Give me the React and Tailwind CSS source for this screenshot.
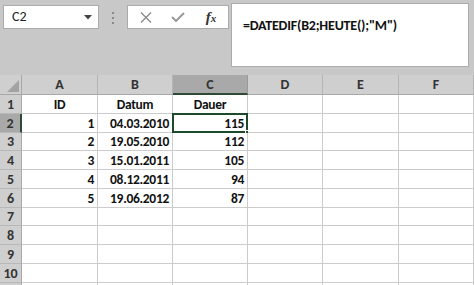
import React from "react";

const COLS = [
  { key: "A", w: "w-[76px]" },
  { key: "B", w: "w-[75px]" },
  { key: "C", w: "w-[75px]" },
  { key: "D", w: "w-[75px]" },
  { key: "E", w: "w-[76px]" },
  { key: "F", w: "w-[75px]" },
];

const ROW_H = ["h-[19px]", "h-[19px]", "h-[18px]", "h-[19px]", "h-[19px]", "h-[19px]", "h-[18px]", "h-[19px]", "h-[19px]", "h-[19px]", "h-[19px]"];

const DATA = {
  1: { A: ["ID", "c"], B: ["Datum", "c"], C: ["Dauer", "c"] },
  2: { A: ["1", "r"], B: ["04.03.2010", "r"], C: ["115", "r"] },
  3: { A: ["2", "r"], B: ["19.05.2010", "r"], C: ["112", "r"] },
  4: { A: ["3", "r"], B: ["15.01.2011", "r"], C: ["105", "r"] },
  5: { A: ["4", "r"], B: ["08.12.2011", "r"], C: ["94", "r"] },
  6: { A: ["5", "r"], B: ["19.06.2012", "r"], C: ["87", "r"] },
};

function Cell({ row, col }) {
  const d = DATA[row] && DATA[row][col.key];
  const selected = row === 2 && col.key === "C";
  return (
    <div
      className={`relative ${col.w} h-full shrink-0 bg-white border-r border-b border-[#cccccc] flex items-end ${
        d && d[1] === "c" ? "justify-center" : "justify-end pr-[3px]"
      }`}
    >
      {d && (
        <span className={`text-[13.5px] leading-[16px] text-[#111] ${row === 1 ? "font-bold" : "font-semibold"} tracking-[-0.3px]`}>
          {d[0]}
        </span>
      )}
      {selected && (
        <>
          <div className="absolute -left-[1px] -top-[1px] right-[-1px] bottom-[-1px] border-2 border-[#1e4a2c]" />
          <div className="absolute right-[-4px] bottom-[-4px] w-[6px] h-[6px] bg-[#1e4a2c] border border-white" />
        </>
      )}
    </div>
  );
}

export default function App() {
  return (
    <div className="w-[474px] h-[285px] overflow-hidden bg-[#c8c8c8] flex flex-col font-['Carlito','Lato',sans-serif] text-[#222]">
      {/* Toolbar */}
      <div className="h-[75px] shrink-0 flex items-start">
        <div className="ml-[3px] mt-[5px] w-[96px] h-[24px] bg-white border border-[#ababab] flex items-center justify-between pl-[8px] pr-[6px]">
          <span className="text-[14px] leading-none text-[#222]">C2</span>
          <svg width="8" height="5" viewBox="0 0 8 5">
            <path d="M0 0 H8 L4 4.5 Z" fill="#444" />
          </svg>
        </div>
        <div className="ml-[13px] mt-[12px] flex flex-col gap-[3px]">
          <div className="w-[2px] h-[2px] bg-[#8a8a8a]" />
          <div className="w-[2px] h-[2px] bg-[#8a8a8a]" />
          <div className="w-[2px] h-[2px] bg-[#8a8a8a]" />
        </div>
        <div className="ml-[13px] mt-[5px] w-[102px] h-[24px] bg-white border border-[#ababab] flex items-center">
          <div className="w-[34px] flex justify-center pl-[2px]">
            <svg width="12" height="11" viewBox="0 0 12 11">
              <path d="M1 0.5 L11 10.5 M11 0.5 L1 10.5" stroke="#8a8a8a" strokeWidth="1.4" />
            </svg>
          </div>
          <div className="w-[32px] flex justify-center">
            <svg width="14" height="10" viewBox="0 0 14 10">
              <path d="M1 5 L5 9 L13 1" stroke="#9a9a9a" strokeWidth="2" fill="none" />
            </svg>
          </div>
          <div className="w-[34px] flex justify-center">
            <span className="font-['Liberation_Serif',serif] italic font-bold text-[15px] leading-none text-[#333]">
              f<span className="text-[11px]">x</span>
            </span>
          </div>
        </div>
        <div className="ml-[2px] mt-[3px] w-[238px] h-[64px] bg-white border border-[#ababab] pl-[11px] pt-[9px]">
          <span className="text-[14px] leading-none font-semibold text-[#111] tracking-[-0.2px]">=DATEDIF(B2;HEUTE();"M")</span>
        </div>
      </div>

      {/* Column header row */}
      <div className="h-[20px] shrink-0 flex">
        <div className="w-[22px] h-full shrink-0 bg-[#cfcfcf] border-r border-b border-[#a8a8a8] relative">
          <svg className="absolute right-[2px] bottom-[2px]" width="12" height="12" viewBox="0 0 12 12">
            <path d="M12 0 L12 12 L0 12 Z" fill="#a2a2a2" />
          </svg>
        </div>
        {COLS.map((c) => (
          <div
            key={c.key}
            className={`${c.w} h-full shrink-0 flex items-center justify-center text-[14px] ${
              c.key === "C"
                ? "bg-[#a9a9a9] border-b-2 border-b-[#2c4a36] border-r border-r-[#9a9a9a]"
                : "bg-[#cfcfcf] border-b border-b-[#a8a8a8] border-r border-r-[#b4b4b4]"
            }`}
          >
            <span className="text-[#333] font-semibold">{c.key}</span>
          </div>
        ))}
      </div>

      {/* Rows */}
      {ROW_H.map((h, i) => {
        const row = i + 1;
        const sel = row === 2;
        return (
          <div key={row} className={`${h} shrink-0 flex`}>
            <div
              className={`w-[22px] h-full shrink-0 flex items-center justify-center text-[14px] font-semibold text-[#333] border-b border-[#b8b8b8] ${
                sel ? "bg-[#a9a9a9] border-r-2 border-r-[#2c4a36]" : "bg-[#cfcfcf] border-r border-r-[#a8a8a8]"
              }`}
            >
              {row <= 10 ? row : ""}
            </div>
            {COLS.map((c) => (
              <Cell key={c.key} row={row} col={c} />
            ))}
          </div>
        );
      })}
    </div>
  );
}
